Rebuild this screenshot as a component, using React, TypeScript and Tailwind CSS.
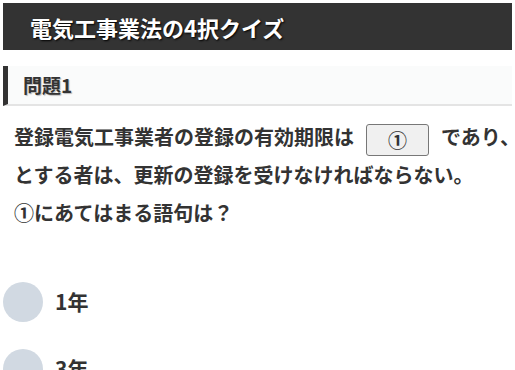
import React from 'react'

const jp = "font-['Noto_Sans_CJK_JP','Noto_Sans',sans-serif]"

const choices = ['1年', '3年', '5年', '7年']

export default function App() {
  return (
    <div className={`h-screen overflow-hidden bg-white p-[3px] text-[#333] ${jp}`}>
      <header className="flex h-[47px] items-center bg-[#333] pl-[27px]">
        <h1 className="text-[22px] font-bold leading-none text-white [text-shadow:1px_1px_2px_#000]">
          電気工事業法の4択クイズ
        </h1>
      </header>

      <section className="mt-4">
        <h2 className="flex h-[40px] items-center border-b-2 border-l-[5px] border-b-[#e4e4e4] border-l-[#333] bg-[#fafbfb] pl-[15px] text-[19px] font-bold [text-shadow:1px_1px_1px_#bbb]">
          問題1
        </h2>

        <p className="mt-3 pl-[11px] text-[20px] font-bold leading-[38px] whitespace-nowrap">
          登録電気工事業者の登録の有効期限は
          <span className="mx-3 inline-flex h-[32px] w-[63px] items-center justify-center rounded-[3px] border border-[#777] bg-[#f0f0f0] align-middle text-[19px] font-bold leading-none">
            ①
          </span>
          であり、更新
          <br />
          とする者は、更新の登録を受けなければならない。
          <br />
          ①にあてはまる語句は？
        </p>

        <ul className="mt-[50px] flex flex-col gap-[27px]">
          {choices.map((c) => (
            <li key={c} className="flex items-center gap-3">
              <span className="h-10 w-10 shrink-0 rounded-full bg-[#d1d9e2]" />
              <span className="text-[21px] font-bold">{c}</span>
            </li>
          ))}
        </ul>
      </section>
    </div>
  )
}
